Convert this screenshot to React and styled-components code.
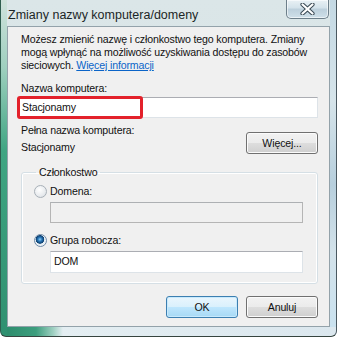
import React from "react";
import styled, { createGlobalStyle } from "styled-components";

const GlobalStyle = createGlobalStyle`
  html, body {
    margin: 0;
    padding: 0;
    background: #ffffff;
  }
  body {
    font-family: "Liberation Sans", Arial, sans-serif;
    color: #111111;
  }
`;

const Window = styled.div`
  width: 337px;
  height: 337px;
  box-sizing: border-box;
  display: flex;
  flex-direction: column;
  border-left: 1px solid #2f5d4f;
  border-right: 1px solid #4a5860;
  border-bottom: 1px solid #36443f;
  border-bottom-left-radius: 6px;
  border-bottom-right-radius: 6px;
  overflow: hidden;
  background:
    linear-gradient(to bottom, #cfe2dc 0, #9fd0bf 20%, #3fa582 45%, #2f9070 100%) left top / 6px 100% no-repeat,
    linear-gradient(to right, #2b8a6a 0, #3d9e7e 35px, #9dcfc0 52px, #e4eef2 62px, #dbe7ee 100%) left bottom / 100% 9px no-repeat,
    linear-gradient(to bottom, #c4d9e4 0, #d6e4ea 30%, #b7cfdd 55%, #d3e2ea 75%, #c9e2f0 100%) right top / 6px 100% no-repeat,
    linear-gradient(to bottom, #dbe6e8 0, #d3e1e4 100%);
`;

const TitleBar = styled.div`
  height: 26px;
  flex: none;
  display: flex;
  justify-content: space-between;
  align-items: flex-start;
  padding-left: 7px;
`;

const Title = styled.div`
  font-size: 12.5px;
  line-height: 15px;
  margin-top: 8px;
  color: #1c2626;
`;

const CloseButton = styled.div`
  width: 43px;
  height: 19px;
  box-sizing: border-box;
  margin-right: 7px;
  border: 1px solid #6d7f8a;
  border-top: none;
  border-radius: 0 0 5px 5px;
  background: linear-gradient(to bottom, #e9f1f5 0, #d3e2ea 45%, #bccfdb 50%, #cfe0e9 100%);
  box-shadow: inset 0 0 0 1px rgba(255, 255, 255, 0.6);
  display: flex;
  align-items: center;
  justify-content: center;
`;

const Panel = styled.div`
  flex: 1;
  margin: 0 6px 9px 6px;
  background: #f0f0f0;
  border: 1px solid #93a2aa;
  display: flex;
  flex-direction: column;
  padding: 6px 11px 0 12px;
  font-size: 10.6px;
  letter-spacing: -0.15px;
  line-height: 13px;
  white-space: nowrap;
`;

const Intro = styled.p`
  margin: 0;
  padding-left: 1px;
`;

const Link = styled.a`
  color: #0a64c8;
  text-decoration: underline;
  cursor: pointer;
`;

const Label = styled.div`
  padding-left: 1px;
  margin-top: ${(p) => p.$top || 0}px;
`;

const Field = styled.div`
  position: relative;
  box-sizing: border-box;
  height: ${(p) => p.$h || 21}px;
  margin-left: ${(p) => p.$indent || 0}px;
  margin-top: ${(p) => p.$top || 0}px;
  background: ${(p) => (p.$disabled ? "#f0f0f0" : "#ffffff")};
  border: 1px solid ${(p) => (p.$disabled ? "#b5b5b5" : "#dde3e8")};
  border-top-color: ${(p) => (p.$disabled ? "#adb0b3" : "#abadb3")};
  padding: 3px 0 0 3px;
`;

const Highlight = styled.div`
  position: absolute;
  left: -2px;
  top: -2px;
  width: 126px;
  height: 23px;
  box-sizing: border-box;
  border: 3px solid #e3212b;
  border-radius: 3px;
`;

const FullNameRow = styled.div`
  display: flex;
  justify-content: space-between;
  align-items: flex-end;
  margin-top: 6px;
`;

const Button = styled.button`
  width: 72px;
  height: 22px;
  box-sizing: border-box;
  font-family: inherit;
  font-size: 10.6px;
  letter-spacing: -0.15px;
  color: #111;
  border-radius: 3px;
  padding: 0;
  border: 1px solid ${(p) => (p.$default ? "#3c7fb1" : "#707070")};
  box-shadow: inset 0 0 0 1px ${(p) => (p.$default ? "#c8eafd" : "#fbfbfb")};
  background: ${(p) =>
    p.$default
      ? "linear-gradient(to bottom, #eaf6fd 0, #d9f0fc 50%, #bee6fd 51%, #a7d9f5 100%)"
      : "linear-gradient(to bottom, #f2f2f2 0, #ebebeb 50%, #dddddd 51%, #cfcfcf 100%)"};
`;

const Group = styled.fieldset`
  margin: 12px 0 0 0;
  margin-left: ${(p) => p.$indent}px;
  padding: 0 14px 10px 12px;
  border: 1px solid #d5dfe5;
  border-radius: 3px;
  box-shadow: inset 0 0 0 1px #ffffff;
`;

const Legend = styled.legend`
  padding: 0 3px;
  margin-left: 2px;
  line-height: 13px;
`;

const RadioRow = styled.label`
  display: flex;
  align-items: center;
  gap: 3px;
  height: 14px;
  margin-top: ${(p) => p.$top}px;
`;

const Radio = styled.span`
  width: 13px;
  height: 13px;
  box-sizing: border-box;
  border-radius: 50%;
  border: 1px solid ${(p) => (p.$checked ? "#6f8aa6" : "#a8b0b8")};
  background: ${(p) =>
    p.$checked
      ? "radial-gradient(circle at 45% 40%, #8fd1f7 0, #2a77b8 2px, #0d3f6e 4px, #e6eef4 4.6px, #f5f8fa 100%)"
      : "radial-gradient(circle at 40% 35%, #ffffff 0, #e8ebee 60%, #d5dadf 100%)"};
  flex: none;
`;

const Footer = styled.div`
  display: flex;
  justify-content: flex-end;
  gap: 8px;
  margin-top: 12px;
`;

const CloseIcon = () => (
  <svg width="15" height="12" viewBox="0 0 15 12">
    <path d="M2.5 1.5 L12.5 10.5 M12.5 1.5 L2.5 10.5" stroke="#3b4a55" strokeWidth="4.2" strokeLinecap="round" />
    <path d="M2.5 1.5 L12.5 10.5 M12.5 1.5 L2.5 10.5" stroke="#ffffff" strokeWidth="2.2" strokeLinecap="round" />
  </svg>
);

export default function App() {
  return (
    <>
      <GlobalStyle />
      <Window>
        <TitleBar>
          <Title>Zmiany nazwy komputera/domeny</Title>
          <CloseButton>
            <CloseIcon />
          </CloseButton>
        </TitleBar>
        <Panel>
          <Intro>
            Możesz zmienić nazwę i członkostwo tego komputera. Zmiany
            <br />
            mogą wpłynąć na możliwość uzyskiwania dostępu do zasobów
            <br />
            sieciowych. <Link>Więcej informacji</Link>
          </Intro>
          <Label $top={10}>Nazwa komputera:</Label>
          <Field $top={2} $indent={-2}>
            Stacjonamy
            <Highlight />
          </Field>
          <FullNameRow>
            <div>
              <Label>Pełna nazwa komputera:</Label>
              <Label $top={4}>Stacjonamy</Label>
            </div>
            <Button>Więcej...</Button>
          </FullNameRow>
          <Group $indent={1}>
            <Legend>Członkostwo</Legend>
            <RadioRow $top={5}>
              <Radio />
              Domena:
            </RadioRow>
            <Field $indent={16} $top={4} $disabled />
            <RadioRow $top={10}>
              <Radio $checked />
              Grupa robocza:
            </RadioRow>
            <Field $indent={16} $top={4} $h={22}>
              DOM
            </Field>
          </Group>
          <Footer>
            <Button $default>OK</Button>
            <Button>Anuluj</Button>
          </Footer>
        </Panel>
      </Window>
    </>
  );
}
